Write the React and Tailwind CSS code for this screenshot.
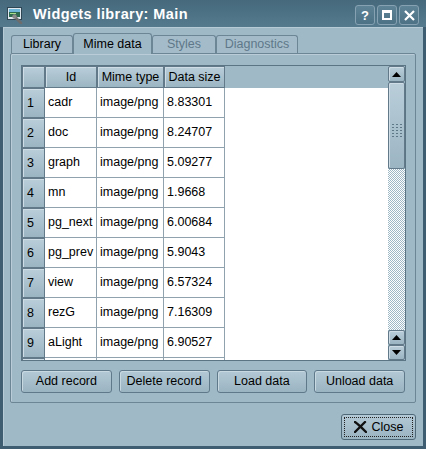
import React from "react";

const rows = [
  ["cadr", "8.83301"],
  ["doc", "8.24707"],
  ["graph", "5.09277"],
  ["mn", "1.9668"],
  ["pg_next", "6.00684"],
  ["pg_prev", "5.9043"],
  ["view", "6.57324"],
  ["rezG", "7.16309"],
  ["aLight", "6.90527"],
  ["", ""],
];

const bevel =
  "border border-[#62798a] bg-gradient-to-b from-[#b9ced9] to-[#9cb5c3] shadow-[inset_1px_1px_0_#cfdee6]";

function TitleButton({ children }) {
  return (
    <div className="w-[20px] h-[20px] rounded-[3px] border border-[#86a2b2] bg-gradient-to-b from-[#5e8396] to-[#4d7185] flex items-center justify-center text-white">
      {children}
    </div>
  );
}

function Arrow({ down }) {
  return (
    <svg width="9" height="5" viewBox="0 0 9 5">
      <path d={down ? "M0 0 L9 0 L4.5 5 Z" : "M0 5 L9 5 L4.5 0 Z"} fill="#000" />
    </svg>
  );
}

export default function App() {
  return (
    <div
      className="w-[426px] h-[449px] bg-[#3e5d70] p-[3px] flex flex-col text-[12.5px] text-black"
      style={{ fontFamily: '"Liberation Sans", Arial, sans-serif' }}
    >
      {/* title bar */}
      <div className="-mx-[3px] -mt-[3px] pt-[3px] h-[27px] bg-gradient-to-b from-[#46697c] to-[#557a8e] flex items-center pl-[7px] pr-[7px] shrink-0">
        <svg width="17" height="17" viewBox="0 0 17 17" className="shrink-0">
          <rect x="0.5" y="0.5" width="14" height="12" fill="#dfe8ee" stroke="#2f4654" />
          <rect x="2" y="2" width="11" height="8" fill="#2d6a4f" />
          <rect x="2" y="2" width="11" height="3" fill="#6fb6d9" />
          <rect x="3" y="6" width="6" height="1" fill="#a6e08a" />
          <path d="M7 9 L14 16" stroke="#6d6d6d" strokeWidth="2.6" strokeLinecap="round" />
          <circle cx="7.5" cy="9.5" r="2.2" fill="#8a8a8a" />
        </svg>
        <span className="ml-[9px] text-white font-bold text-[14.5px] tracking-[0.4px]">Widgets library: Main</span>
        <div className="ml-auto flex gap-[2px]">
          <TitleButton>
            <span className="font-bold text-[13px] leading-none">?</span>
          </TitleButton>
          <TitleButton>
            <div className="w-[10px] h-[10px] border-2 border-white border-t-[3px]" />
          </TitleButton>
          <TitleButton>
            <svg width="11" height="11" viewBox="0 0 11 11">
              <path d="M1 1 L10 10 M10 1 L1 10" stroke="#fff" strokeWidth="2.2" />
            </svg>
          </TitleButton>
        </div>
      </div>

      {/* body */}
      <div className="flex-1 bg-[#a0b9c7] border-l border-t border-[#b7cbd6] flex flex-col pl-[6px] pr-[7px] pt-[5px]">
        {/* tabs */}
        <div className="flex items-end h-[20px] pl-[1px] relative z-10">
          <div className="w-[62px] h-[18px] border border-b-0 border-[#6c8696] rounded-t-[3px] bg-[#a4bcca] flex items-center justify-center">
            Library
          </div>
          <div className="w-[79px] h-[21px] -mb-px border border-b-0 border-[#6c8696] rounded-t-[3px] bg-[#a0b9c7] flex items-center justify-center">
            Mime data
          </div>
          <div className="w-[64px] h-[18px] border border-b-0 border-[#6c8696] rounded-t-[3px] bg-[#a4bcca] flex items-center justify-center text-[#5f7889]">
            Styles
          </div>
          <div className="w-[82px] h-[18px] border border-b-0 border-[#6c8696] rounded-t-[3px] bg-[#a4bcca] flex items-center justify-center text-[#5f7889]">
            Diagnostics
          </div>
        </div>

        {/* panel */}
        <div className="h-[350px] border border-[#6c8696] rounded-[2px] shadow-[inset_1px_1px_0_#b9ccd7] px-[10px] pt-[11px] flex flex-col">
          {/* table */}
          <div className="w-[385px] h-[296px] border border-[#5c7585] flex">
            <div className="flex-1 flex flex-col overflow-hidden bg-white">
              <div className="flex h-[22px] shrink-0 bg-[#a0b9c7]">
                <div className={`w-[23px] ${bevel}`} />
                <div className={`w-[52px] ${bevel} flex items-center justify-center`}>Id</div>
                <div className={`w-[67px] ${bevel} flex items-center justify-center`}>Mime type</div>
                <div className={`w-[61px] ${bevel} flex items-center justify-center`}>Data size</div>
                <div className="flex-1 bg-[#a0b9c7]" />
              </div>
              {rows.map((r, i) => (
                <div key={i} className="flex h-[30px] shrink-0">
                  <div className={`w-[23px] ${bevel} flex items-center pl-[4px]`}>{r[0] ? i + 1 : ""}</div>
                  <div className="w-[52px] border-r border-b border-[#8fa2ae] flex items-center pl-[3px]">{r[0]}</div>
                  <div className="w-[67px] border-r border-b border-[#8fa2ae] flex items-center pl-[3px]">
                    {r[0] ? "image/png" : ""}
                  </div>
                  <div className="w-[61px] border-r border-b border-[#8fa2ae] flex items-center pl-[3px]">{r[1]}</div>
                </div>
              ))}
            </div>

            {/* scrollbar */}
            <div className="w-[17px] flex flex-col bg-[#a0b9c7]">
              <div className={`h-[16px] rounded-[2px] ${bevel} flex items-center justify-center`}>
                <Arrow />
              </div>
              <div className={`h-[87px] rounded-[2px] ${bevel} flex items-center justify-center`}>
                <div className="grid grid-cols-3 gap-x-[2px] gap-y-[2px] mt-[10px]">
                  {Array.from({ length: 15 }).map((_, k) => (
                    <div key={k} className="w-[2px] h-[1px] bg-[#5f7888]" />
                  ))}
                </div>
              </div>
              <div className="flex-1 bg-[repeating-conic-gradient(#9fb8c6_0%_25%,#ffffff_0%_50%)] bg-[length:2px_2px]" />
              <div className={`h-[15px] rounded-[2px] ${bevel} flex items-center justify-center`}>
                <Arrow />
              </div>
              <div className={`h-[15px] rounded-[2px] ${bevel} flex items-center justify-center`}>
                <Arrow down />
              </div>
            </div>
          </div>

          {/* buttons */}
          <div className="flex gap-[7px] mt-[9px]">
            {["Add record", "Delete record", "Load data", "Unload data"].map((t) => (
              <button
                key={t}
                className="w-[92px] h-[23px] rounded-[3px] border border-[#60798a] bg-gradient-to-b from-[#b3c9d5] to-[#9bb4c2] shadow-[inset_1px_1px_0_#c8d9e2] flex items-center justify-center"
              >
                {t}
              </button>
            ))}
          </div>
        </div>

        {/* close */}
        <div className="flex justify-end mt-[11px]">
          <button className="w-[75px] h-[26px] rounded-[3px] border border-[#4f6878] bg-gradient-to-b from-[#b3c9d5] to-[#9bb4c2] p-[2px]">
            <div className="w-full h-full border border-dotted border-[#222] flex items-center justify-center gap-[5px]">
              <svg width="13" height="12" viewBox="0 0 13 12">
                <path d="M1 1 C4 3 8 7 12 11 M11 1 C8 4 5 7 1 11" stroke="#111" strokeWidth="2.4" strokeLinecap="round" />
              </svg>
              <span>Close</span>
            </div>
          </button>
        </div>
      </div>
    </div>
  );
}
